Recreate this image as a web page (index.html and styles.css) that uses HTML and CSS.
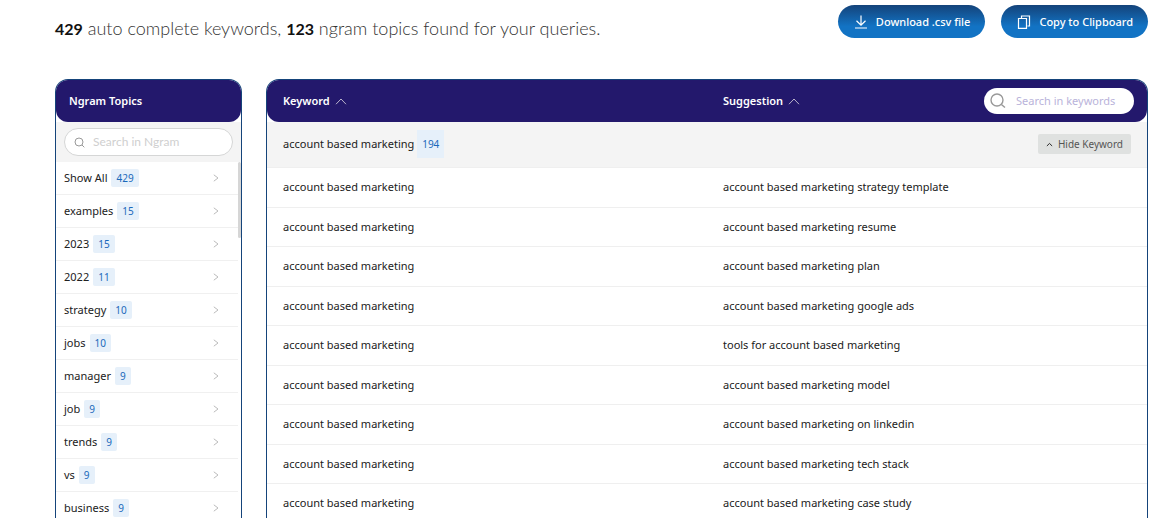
FILE: index.html
```html
<!DOCTYPE html>
<html lang="en">
<head>
<meta charset="utf-8">
<meta name="viewport" content="width=device-width, initial-scale=1">
<title>Keyword results</title>
<link rel="stylesheet" href="styles.css">
</head>
<body>
<div class="page">
  <header class="topbar">
    <p class="summary"><b>429</b> auto complete keywords, <b>123</b> ngram topics found for your queries.</p>
    <div class="actions">
      <button type="button" class="action"><svg width="14" height="14" viewBox="0 0 14 14"><path d="M7 0.5V10M2.5 5.8L7 10.2L11.5 5.8M1 13H13"/></svg>Download .csv file</button>
      <button type="button" class="action"><svg width="14" height="14" viewBox="0 0 14 14"><path d="M4.5 3V1H12.5V11H10.5M1.5 3.5H9.5V13.3H1.5Z"/></svg>Copy to Clipboard</button>
    </div>
  </header>
  <main class="panels">
    <aside class="panel topics">
      <h2 class="panel-head">Ngram Topics</h2>
      <div class="topic-filter">
        <label class="field">
          <svg width="11" height="11" viewBox="0 0 11 11"><circle cx="5" cy="5" r="4"/><path d="M8 8L10.3 10.3"/></svg>
          <input type="text" placeholder="Search in Ngram" aria-label="Search in Ngram">
        </label>
      </div>
      <div class="topic-scroll">
        <ul class="topic-list">
          <li><button type="button" class="topic">Show All <span class="count">429</span><svg class="chevron" width="6" height="8" viewBox="0 0 6 8"><path d="M0.8 0.8L5 4L0.8 7.2"/></svg></button></li>
          <li><button type="button" class="topic">examples <span class="count">15</span><svg class="chevron" width="6" height="8" viewBox="0 0 6 8"><path d="M0.8 0.8L5 4L0.8 7.2"/></svg></button></li>
          <li><button type="button" class="topic">2023 <span class="count">15</span><svg class="chevron" width="6" height="8" viewBox="0 0 6 8"><path d="M0.8 0.8L5 4L0.8 7.2"/></svg></button></li>
          <li><button type="button" class="topic">2022 <span class="count">11</span><svg class="chevron" width="6" height="8" viewBox="0 0 6 8"><path d="M0.8 0.8L5 4L0.8 7.2"/></svg></button></li>
          <li><button type="button" class="topic">strategy <span class="count">10</span><svg class="chevron" width="6" height="8" viewBox="0 0 6 8"><path d="M0.8 0.8L5 4L0.8 7.2"/></svg></button></li>
          <li><button type="button" class="topic">jobs <span class="count">10</span><svg class="chevron" width="6" height="8" viewBox="0 0 6 8"><path d="M0.8 0.8L5 4L0.8 7.2"/></svg></button></li>
          <li><button type="button" class="topic">manager <span class="count">9</span><svg class="chevron" width="6" height="8" viewBox="0 0 6 8"><path d="M0.8 0.8L5 4L0.8 7.2"/></svg></button></li>
          <li><button type="button" class="topic">job <span class="count">9</span><svg class="chevron" width="6" height="8" viewBox="0 0 6 8"><path d="M0.8 0.8L5 4L0.8 7.2"/></svg></button></li>
          <li><button type="button" class="topic">trends <span class="count">9</span><svg class="chevron" width="6" height="8" viewBox="0 0 6 8"><path d="M0.8 0.8L5 4L0.8 7.2"/></svg></button></li>
          <li><button type="button" class="topic">vs <span class="count">9</span><svg class="chevron" width="6" height="8" viewBox="0 0 6 8"><path d="M0.8 0.8L5 4L0.8 7.2"/></svg></button></li>
          <li><button type="button" class="topic">business <span class="count">9</span><svg class="chevron" width="6" height="8" viewBox="0 0 6 8"><path d="M0.8 0.8L5 4L0.8 7.2"/></svg></button></li>
        </ul>
        <div class="scroll-track"><div class="scroll-thumb"></div></div>
      </div>
    </aside>
    <section class="panel results">
      <table class="keywords">
        <thead>
          <tr>
            <th scope="col">Keyword <svg class="sort" width="12" height="7" viewBox="0 0 12 7"><path d="M1 6.2L6 1L11 6.2"/></svg></th>
            <th scope="col">
              <div class="head-cell">
                <span>Suggestion <svg class="sort" width="12" height="7" viewBox="0 0 12 7"><path d="M1 6.2L6 1L11 6.2"/></svg></span>
                <label class="field">
                  <svg width="16" height="16" viewBox="0 0 16 16"><circle cx="7" cy="7" r="6"/><path d="M11.4 11.4L15 14.6"/></svg>
                  <input type="text" placeholder="Search in keywords" aria-label="Search in keywords">
                </label>
              </div>
            </th>
          </tr>
        </thead>
        <tbody class="group">
          <tr>
            <td>account based marketing <span class="count">194</span></td>
            <td class="toggle-cell"><button type="button" class="toggle"><svg width="7" height="5" viewBox="0 0 8 5"><path d="M1 4.2L4 1.3L7 4.2"/></svg>Hide Keyword</button></td>
          </tr>
        </tbody>
        <tbody class="rows">
          <tr><td>account based marketing</td><td>account based marketing strategy template</td></tr>
          <tr><td>account based marketing</td><td>account based marketing resume</td></tr>
          <tr><td>account based marketing</td><td>account based marketing plan</td></tr>
          <tr><td>account based marketing</td><td>account based marketing google ads</td></tr>
          <tr><td>account based marketing</td><td>tools for account based marketing</td></tr>
          <tr><td>account based marketing</td><td>account based marketing model</td></tr>
          <tr><td>account based marketing</td><td>account based marketing on linkedin</td></tr>
          <tr><td>account based marketing</td><td>account based marketing tech stack</td></tr>
          <tr><td>account based marketing</td><td>account based marketing case study</td></tr>
        </tbody>
      </table>
    </section>
  </main>
</div>
</body>
</html>
```

FILE: styles.css
```css
* { box-sizing: border-box; }

body {
  margin: 0;
  background: #fff;
  color: #212121;
  font: 11px/16px "Noto Sans", sans-serif;
}

button, input { font: inherit; color: inherit; }
button { border: 0; cursor: pointer; }
svg { fill: none; stroke: currentColor; flex: none; }

.page {
  height: 100vh;
  padding: 5px 19px 0 55px;
  display: flex;
  flex-direction: column;
  overflow: hidden;
}

.topbar {
  display: flex;
  justify-content: space-between;
  align-items: flex-start;
  margin-bottom: 39px;
}

.summary {
  margin: 0;
  padding-top: 12px;
  color: #333;
  font: 300 18px/22px Lato, sans-serif;
}
.summary b { font-size: 16px; font-weight: 700; color: #111; }

.actions { display: flex; gap: 16px; }
.action {
  display: flex;
  align-items: center;
  gap: 8px;
  height: 33px;
  padding: 0 15px 0 16px;
  border-radius: 17px;
  background: linear-gradient(#14437a, #1273c4 65%);
  color: #fff;
  font-weight: 500;
}
.action svg { stroke-width: 1.2; }

.panels {
  flex: 1;
  min-height: 0;
  display: grid;
  grid-template-columns: 187px minmax(0, 1fr);
  gap: 24px;
}

.panel {
  min-height: 0;
  border: 1px solid #15447a;
  border-bottom: 0;
  border-radius: 13px 13px 0 0;
  overflow: hidden;
}

.topics { display: flex; flex-direction: column; }

.panel-head {
  margin: 0;
  padding: 13px;
  border-radius: 0 0 12px 12px;
  background: #23186c;
  color: #fff;
  font-size: 11px;
  font-weight: 600;
  line-height: 16px;
}

.field {
  display: flex;
  align-items: center;
  background: #fff;
  border-radius: 14px;
}
.field input {
  flex: 1;
  min-width: 0;
  padding: 0;
  border: 0;
  outline: 0;
  background: none;
}
.field svg { color: #999; }

.topic-filter { padding: 6px 8px; background: #f4f4f4; }
.topic-filter .field {
  height: 28px;
  gap: 8px;
  padding: 0 9px;
  border: 1px solid #d5d6d6;
}
.topic-filter input { font: 12px/16px Lato, sans-serif; }
.topic-filter input::placeholder { color: #cfcfcf; }

.topic-scroll { flex: 1; min-height: 0; display: flex; overflow: hidden; }
.topic-list { flex: 1; margin: 0; padding: 0; list-style: none; }
.topic {
  display: flex;
  align-items: center;
  gap: 4px;
  width: 100%;
  height: 33px;
  padding: 0 19px 0 8px;
  border-bottom: 1px solid #f0f0f0;
  background: #fff;
}
.chevron { margin-left: auto; color: #bbb; }

.count {
  padding: 1px 5px;
  border-radius: 2px;
  background: #e6f0fa;
  color: #1a69bb;
  font-size: 10px;
}

.scroll-track { width: 3px; }
.scroll-thumb { height: 76px; border-radius: 2px; background: #d6d6d6; }

.keywords {
  width: 100%;
  table-layout: fixed;
  border-spacing: 0;
}
.keywords th {
  height: 42px;
  padding: 0 0 0 16px;
  background: #23186c;
  color: #fff;
  font-weight: 600;
  text-align: left;
}
.keywords th:first-child { border-bottom-left-radius: 12px; }
.keywords th:last-child { border-bottom-right-radius: 12px; padding-right: 13px; }
.sort { margin-left: 2px; color: #bbb5cc; }

.head-cell { display: flex; align-items: center; justify-content: space-between; }
.head-cell .field {
  width: 150px;
  height: 26px;
  gap: 10px;
  padding: 0 6px;
  font-weight: 400;
}
.head-cell input::placeholder { color: #b9b3da; }
.head-cell .field svg { stroke-width: 1.4; }
.head-cell input { color: #23186c; }

.keywords td { padding: 0 16px 1px; border-bottom: 1px solid #efefef; }
.group td { height: 46px; background: #f4f4f4; }
.group .count { display: inline-block; padding: 6px 5px; border-radius: 0; }
.keywords .toggle-cell { text-align: right; }
.toggle {
  display: inline-flex;
  align-items: center;
  gap: 5px;
  height: 20px;
  padding: 0 8px;
  border-radius: 2px;
  background: #dfe1e0;
  color: #555;
  font-size: 10px;
}
.toggle svg { color: #111; }

.rows td { height: 39px; }
.rows tr:nth-child(odd) td { height: 40px; }
```
